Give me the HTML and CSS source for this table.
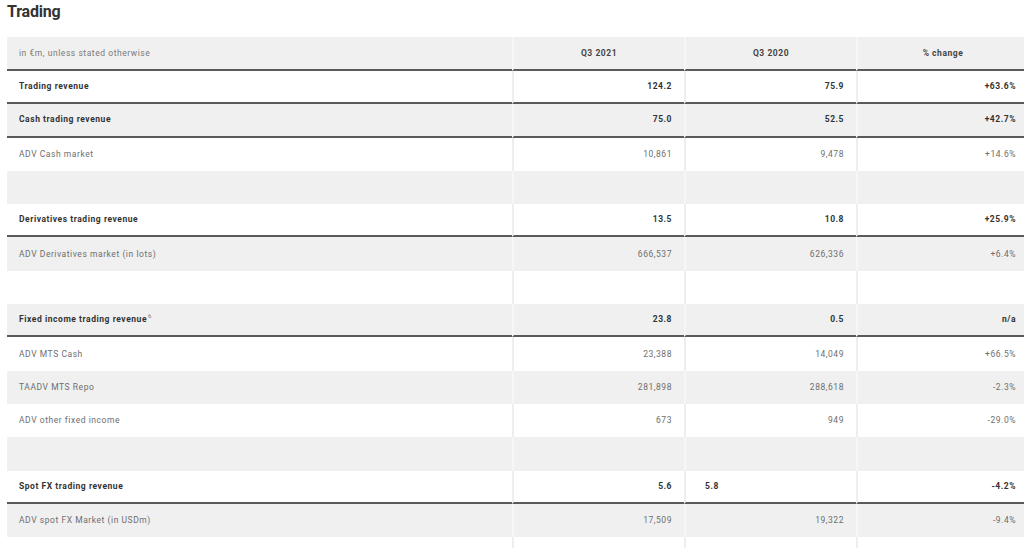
FILE: index.html
```html
<!DOCTYPE html>
<html lang="en">
<head>
<meta charset="utf-8">
<title>Trading</title>
<link rel="stylesheet" href="styles.css">
</head>
<body>
<div class="page">
  <h1 class="title">Trading</h1>
  <table class="kpi">
    <colgroup>
      <col class="c-label">
      <col class="c-num">
      <col class="c-num">
      <col class="c-num">
    </colgroup>
    <thead>
      <tr class="head">
        <th class="lbl">in €m, unless stated otherwise</th>
        <th>Q3 2021</th>
        <th>Q3 2020</th>
        <th>% change</th>
      </tr>
    </thead>
    <tbody>
      <tr class="strong rule"><td>Trading revenue</td><td>124.2</td><td>75.9</td><td>+63.6%</td></tr>
      <tr class="strong rule"><td>Cash trading revenue</td><td>75.0</td><td>52.5</td><td>+42.7%</td></tr>
      <tr><td>ADV Cash market</td><td>10,861</td><td>9,478</td><td>+14.6%</td></tr>
      <tr class="blank"><td></td><td></td><td></td><td></td></tr>
      <tr class="strong rule"><td>Derivatives trading revenue</td><td>13.5</td><td>10.8</td><td>+25.9%</td></tr>
      <tr><td>ADV Derivatives market (in lots)</td><td>666,537</td><td>626,336</td><td>+6.4%</td></tr>
      <tr class="blank"><td></td><td></td><td></td><td></td></tr>
      <tr class="strong rule"><td>Fixed income trading revenue<sup class="note">6</sup></td><td>23.8</td><td>0.5</td><td>n/a</td></tr>
      <tr><td>ADV MTS Cash</td><td>23,388</td><td>14,049</td><td>+66.5%</td></tr>
      <tr><td>TAADV MTS Repo</td><td>281,898</td><td>288,618</td><td>-2.3%</td></tr>
      <tr><td>ADV other fixed income</td><td>673</td><td>949</td><td>-29.0%</td></tr>
      <tr class="blank"><td></td><td></td><td></td><td></td></tr>
      <tr class="strong rule"><td>Spot FX trading revenue</td><td>5.6</td><td class="left">5.8</td><td>-4.2%</td></tr>
      <tr><td>ADV spot FX Market (in USDm)</td><td>17,509</td><td>19,322</td><td>-9.4%</td></tr>
      <tr class="blank"><td></td><td></td><td></td><td></td></tr>
    </tbody>
  </table>
</div>
</body>
</html>
```

FILE: styles.css
```css
html, body {
  margin: 0;
  padding: 0;
  background: #ffffff;
  overflow: hidden;
}

body {
  font-family: Roboto, "Liberation Sans", sans-serif;
  color: #333333;
}

.page {
  padding-left: 7px;
}

.title {
  margin: 0 0 13px 0;
  font-size: 16px;
  line-height: 24px;
  font-weight: 700;
  color: #333333;
  letter-spacing: -0.2px;
}

.kpi {
  width: 1019px;
  table-layout: fixed;
  border-collapse: separate;
  border-spacing: 0;
  font-size: 8.5px;
  letter-spacing: 0.55px;
}

.c-label { width: 505px; }
.c-num { width: 172px; }

.kpi th,
.kpi td {
  height: 33.3px;
  box-sizing: border-box;
  padding: 0 12px 0 12px;
  text-align: right;
  vertical-align: middle;
  white-space: nowrap;
  line-height: 13px;
}

.kpi th:first-child,
.kpi td:first-child {
  text-align: left;
}

.kpi th + th,
.kpi td + td {
  border-left: 2px solid #eceef1;
}

.kpi tbody tr:nth-child(even) td {
  background: #f0f0f0;
}
.kpi tbody tr:nth-child(even) td + td {
  border-left-color: #f6f6f6;
}
.kpi tbody tr:nth-child(odd) td {
  background: #ffffff;
}

.head th {
  background: #f0f0f0;
  border-bottom: 2px solid #5a5a5a;
  text-align: center;
  font-weight: 700;
  color: #444444;
  height: 34px;
}
.head th + th {
  border-left-color: #f6f6f6;
}
.head th.lbl {
  text-align: left;
  font-weight: 400;
  color: #7a7a7a;
}

.kpi td {
  color: #6e6e6e;
}

.kpi tr.strong td {
  font-weight: 700;
  color: #333333;
}
.kpi tr.rule td {
  border-bottom: 2px solid #5a5a5a;
}

.kpi td.left {
  text-align: left;
  padding-left: 19px;
}

.note {
  font-size: 6px;
  font-weight: 400;
  color: #777777;
  vertical-align: 4px;
  line-height: 0;
  margin-left: 1px;
}
```
